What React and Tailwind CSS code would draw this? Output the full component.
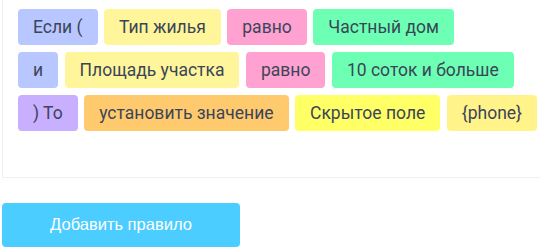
import React from "react";

const rows = [
  [
    ["Если (", "bg-[#b8c7ff]"],
    ["Тип жилья", "bg-[#fff59a]"],
    ["равно", "bg-[#ffa2d2]"],
    ["Частный дом", "bg-[#6dffb3]"],
  ],
  [
    ["и", "bg-[#b8c7ff]"],
    ["Площадь участка", "bg-[#fff59a]"],
    ["равно", "bg-[#ffa2d2]"],
    ["10 соток и больше", "bg-[#6dffb3]"],
  ],
  [
    [") То", "bg-[#c8afff]"],
    ["установить значение", "bg-[#ffca6e]"],
    ["Скрытое поле", "bg-[#ffff66]"],
    ["{phone}", "bg-[#fff38a]"],
  ],
];

export default function App() {
  return (
    <div className="w-[540px] h-[251px] overflow-hidden bg-white pl-[2px]">
      <div className="w-[600px] border-x border-b border-[#f0f0f0] pt-[9px] pb-[46px] pl-[15px] flex flex-col gap-y-[7.5px]">
        {rows.map((row, i) => (
          <div key={i} className="flex gap-x-[6.5px]">
            {row.map(([t, c], j) => (
              <div
                key={j}
                className={`${c} h-[35.5px] px-[15px] rounded-[4px] flex items-center text-[17.5px] text-[#3b4558] whitespace-nowrap`}
                style={{ fontFamily: "Roboto, sans-serif" }}
              >
                {t}
              </div>
            ))}
          </div>
        ))}
      </div>
      <button
        className="mt-[25px] w-[238px] h-[44px] rounded-[4px] bg-[#4bcdff] text-white text-[16.5px] flex items-center justify-center"
        style={{ fontFamily: "'Liberation Sans', Arial, sans-serif" }}
      >
        Добавить правило
      </button>
    </div>
  );
}
